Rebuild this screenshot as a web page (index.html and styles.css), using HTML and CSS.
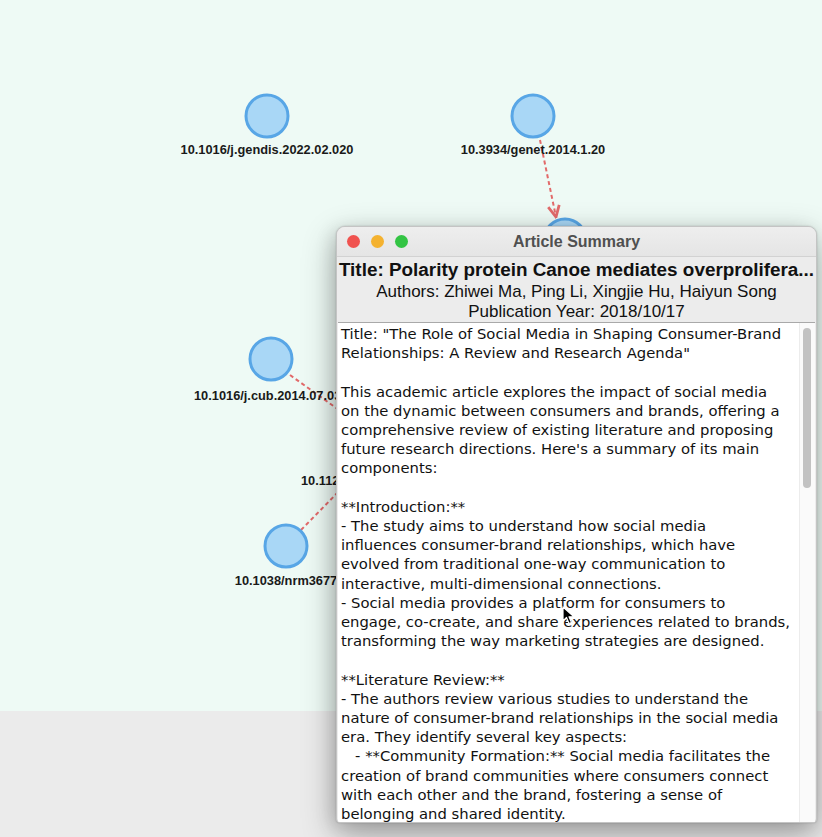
FILE: index.html
```html
<!DOCTYPE html>
<html lang="en">
<head>
<meta charset="utf-8">
<title>Article Summary</title>
<link rel="stylesheet" href="styles.css">
</head>
<body>
<div class="stage">
  <div class="canvas">
    <svg class="graph" width="822" height="711" viewBox="0 0 822 711">
      <defs>
        <marker id="arrow" viewBox="0 0 10 10" refX="9" refY="5" markerWidth="7" markerHeight="7" orient="auto">
          <path d="M1 1 L9 5 L1 9" fill="none" stroke="#e26a6a" stroke-width="2"/>
        </marker>
        <clipPath id="leftside"><rect x="0" y="0" width="337" height="711"/></clipPath>
      </defs>
      <g class="edges">
        <line x1="540" y1="140" x2="556" y2="217" marker-end="url(#arrow)"/>
        <line x1="290" y1="375" x2="360" y2="425"/>
        <line x1="301" y1="530" x2="350" y2="480"/>
      </g>
      <g class="nodes">
        <circle cx="267" cy="116" r="21"/>
        <circle cx="533" cy="116" r="21"/>
        <circle cx="565" cy="240" r="21"/>
        <circle cx="271" cy="359" r="21"/>
        <circle cx="286" cy="546" r="21"/>
      </g>
      <g class="labels">
        <text x="267" y="154" text-anchor="middle">10.1016/j.gendis.2022.02.020</text>
        <text x="533" y="154" text-anchor="middle">10.3934/genet.2014.1.20</text>
        <text x="194" y="400" clip-path="url(#leftside)">10.1016/j.cub.2014.07.031</text>
        <text x="301" y="485" clip-path="url(#leftside)">10.112</text>
        <text x="286" y="585" text-anchor="middle">10.1038/nrm3677</text>
      </g>
    </svg>
  </div>
  <div class="floor"></div>

  <div class="window">
    <div class="titlebar">
      <div class="lights">
        <span class="light red"></span>
        <span class="light yellow"></span>
        <span class="light green"></span>
      </div>
      <div class="wtitle">Article Summary</div>
    </div>
    <div class="meta">
      <div class="meta-title">Title: Polarity protein Canoe mediates overprolifera...</div>
      <div class="meta-line">Authors: Zhiwei Ma, Ping Li, Xingjie Hu, Haiyun Song</div>
      <div class="meta-line last">Publication Year: 2018/10/17</div>
    </div>
    <div class="textarea">
      <div class="text">Title: "The Role of Social Media in Shaping Consumer-Brand
Relationships: A Review and Research Agenda"

This academic article explores the impact of social media
on the dynamic between consumers and brands, offering a
comprehensive review of existing literature and proposing
future research directions. Here's a summary of its main
components:

**Introduction:**
- The study aims to understand how social media
influences consumer-brand relationships, which have
evolved from traditional one-way communication to
interactive, multi-dimensional connections.
- Social media provides a platform for consumers to
engage, co-create, and share experiences related to brands,
transforming the way marketing strategies are designed.

**Literature Review:**
- The authors review various studies to understand the
nature of consumer-brand relationships in the social media
era. They identify several key aspects:
   - **Community Formation:** Social media facilitates the
creation of brand communities where consumers connect
with each other and the brand, fostering a sense of
belonging and shared identity.</div>
      <div class="scrolltrack"><div class="thumb"></div></div>
    </div>
  </div>

  <svg class="cursor" width="14" height="20" viewBox="0 0 14 20">
    <path d="M1 1 L1 15 L4.5 11.5 L7 17.5 L9.5 16.5 L7 10.8 L12 10.8 Z" fill="#000" stroke="#fff" stroke-width="1.2" stroke-linejoin="round"/>
  </svg>
</div>
</body>
</html>
```

FILE: styles.css
```css
* { box-sizing: border-box; }

html, body {
  margin: 0;
  padding: 0;
  background: #ebebeb;
}

.stage {
  position: relative;
  width: 822px;
  height: 837px;
  overflow: hidden;
}

.canvas {
  position: relative;
  height: 711px;
  background: #eefaf5;
}

.floor {
  height: 126px;
  background: #ebebeb;
}

.graph {
  position: absolute;
  left: 0;
  top: 0;
}

.edges line {
  stroke: #e26a6a;
  stroke-width: 2;
  stroke-dasharray: 4 3;
}

.nodes circle {
  fill: #a9d7f6;
  stroke: #58a6e6;
  stroke-width: 3;
}

.labels text {
  font-family: "Liberation Sans", Arial, sans-serif;
  font-weight: bold;
  font-size: 12.8px;
  fill: #1a1a1a;
}

.window {
  position: absolute;
  left: 336px;
  top: 226px;
  width: 481px;
  height: 597px;
  background: #ececec;
  border: 1px solid #c4c4c4;
  border-radius: 9px 9px 4px 4px;
  box-shadow: 0 12px 34px rgba(0, 0, 0, 0.3), -4px 4px 18px rgba(0, 0, 0, 0.12), 0 0 2px rgba(0, 0, 0, 0.2);
  display: flex;
  flex-direction: column;
  overflow: hidden;
}

.titlebar {
  position: relative;
  height: 30px;
  flex: none;
  display: flex;
  align-items: center;
  justify-content: center;
  background: linear-gradient(#eeeeee, #e5e5e5);
  border-bottom: 1px solid #d2d2d2;
}

.lights {
  position: absolute;
  left: 10px;
  top: 8px;
  display: flex;
  gap: 11px;
}

.light {
  width: 13px;
  height: 13px;
  border-radius: 50%;
  display: block;
}
.light.red { background: #f0524f; }
.light.yellow { background: #f4b230; }
.light.green { background: #33c444; }

.wtitle {
  font-family: "Liberation Sans", Arial, sans-serif;
  font-weight: bold;
  font-size: 16px;
  color: #505050;
}

.meta {
  flex: none;
  padding: 2px 0 0;
  text-align: center;
  font-family: "Liberation Sans", Arial, sans-serif;
  color: #111;
  background: #ececec;
}

.meta-title {
  font-weight: bold;
  font-size: 18.9px;
  line-height: 22px;
  white-space: nowrap;
}

.meta-line {
  font-size: 17px;
  line-height: 21px;
}

.meta-line.last {
  line-height: 20px;
}

.textarea {
  flex: 1;
  min-height: 0;
  display: flex;
  background: #fff;
  border-top: 1px solid #a9a9a9;
  margin: 0 1px;
  overflow: hidden;
}

.text {
  flex: 1;
  padding: 1px 0 0 3px;
  white-space: pre;
  font-family: "DejaVu Sans", sans-serif;
  font-size: 14.8px;
  line-height: 19.2px;
  color: #111;
  overflow: hidden;
}

.scrolltrack {
  flex: none;
  width: 16px;
  padding: 5px 4px 0 3px;
  background: #fafafa;
  border-left: 1px solid #ececec;
}

.thumb {
  width: 8px;
  height: 160px;
  border-radius: 4px;
  background: #c2c2c2;
}

.cursor {
  position: absolute;
  left: 562px;
  top: 606px;
}
```
